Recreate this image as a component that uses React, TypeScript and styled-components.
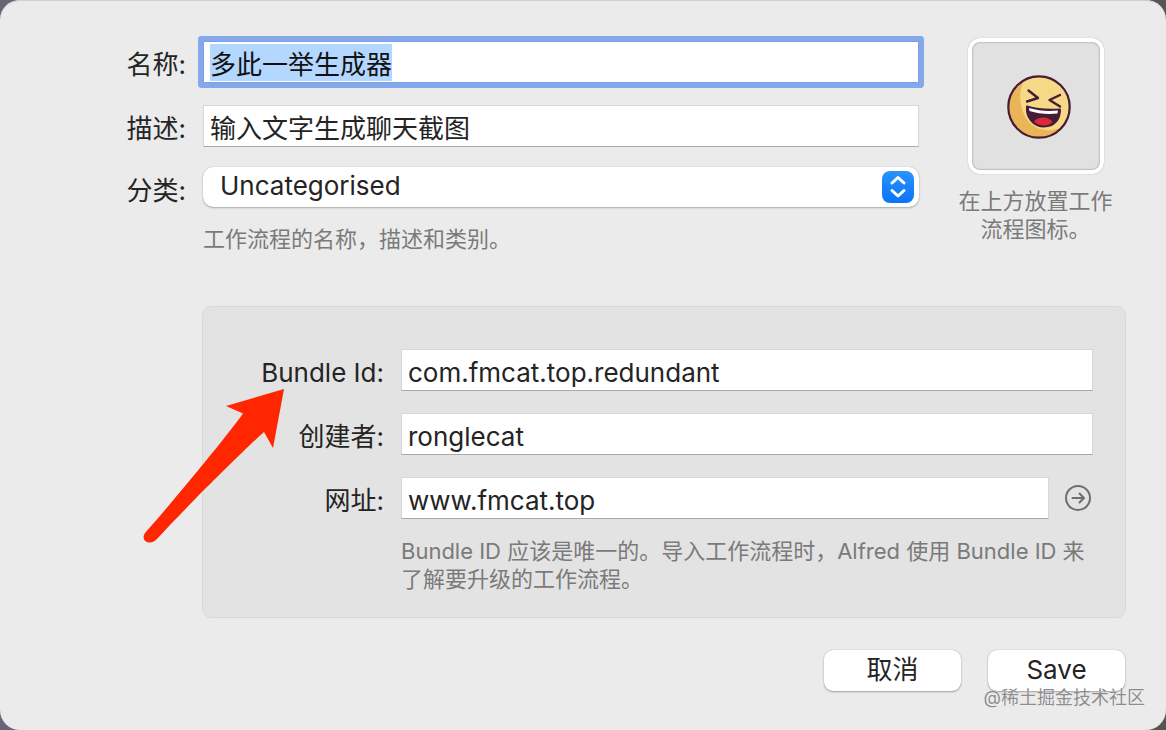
import React, { useEffect, useRef } from "react";
import styled, { createGlobalStyle } from "styled-components";

const GlobalStyle = createGlobalStyle`
  *, *::before, *::after { box-sizing: border-box; }
  body {
    margin: 0;
    background: linear-gradient(90deg, #6b6479 0%, #5c5a60 60%, #555 100%);
    font-family: Inter, "Noto Sans CJK SC", sans-serif;
    color: #242424;
  }
  button, input, select { font: inherit; color: inherit; }
`;

const Sheet = styled.form`
  position: relative;
  min-height: 100vh;
  padding: 41px 40px 39px;
  background: #ebebeb;
  border-radius: 20px;
  box-shadow: inset 0 1px 0 #cfcfcf;
  font-size: 26px;
  line-height: 34px;
`;

const Summary = styled.section`
  display: flex;
  gap: 38px;
  padding-right: 12px;
`;

const Fields = styled.div<{ $labelWidth: number }>`
  flex: 1;
  display: grid;
  grid-template-columns: ${(p) => p.$labelWidth}px minmax(0, 1fr);
  column-gap: 17px;
  row-gap: 22px;
  align-items: center;
  align-content: start;
`;

const Label = styled.label`
  text-align: right;
  white-space: nowrap;
  line-height: 28px;
  padding-top: 6px;
`;

const TextInput = styled.input<{ $cjk?: boolean }>`
  width: 100%;
  min-width: 0;
  height: 42px;
  padding: ${(p) => (p.$cjk ? "3px 6px" : "5px 6px 1px")};
  border: 1px solid #d6d6d6;
  border-bottom-color: #a9a9a9;
  border-radius: 0;
  background: #fff;
  line-height: 34px;
  outline: none;

  &:focus {
    border-color: #7f9fdc;
    box-shadow: 0 0 0 5px #84a8ec;
    border-radius: 1px;
  }
  &::selection {
    background: #b3d7ff;
    color: #111;
  }
`;

const SelectBox = styled.div`
  position: relative;
  height: 40px;
  margin-top: -2px;
`;

const Select = styled.select`
  display: block;
  appearance: none;
  width: 100%;
  height: 40px;
  padding: 0 48px 2px 17px;
  border: 0;
  border-radius: 10px;
  background: #fff;
  box-shadow: 0 0 1px rgba(0, 0, 0, 0.3), 0 1px 2px rgba(0, 0, 0, 0.25);
  outline: none;
`;

const Stepper = styled.svg`
  position: absolute;
  top: 4px;
  right: 5px;
  pointer-events: none;
`;

const Hint = styled.p`
  margin: 0;
  font-size: 22px;
  line-height: 28px;
  color: #7a7a7a;
`;

const FieldHint = styled(Hint)`
  grid-column: 2;
  margin-top: -4px;
`;

const IconColumn = styled.div`
  width: 157px;
  display: flex;
  flex-direction: column;
  align-items: center;
  gap: 13px;
  text-align: center;
`;

const IconWell = styled.button`
  display: grid;
  place-items: center;
  width: 136px;
  height: 136px;
  margin-top: -3px;
  padding: 0;
  border: 4px solid #fff;
  border-radius: 12px;
  background: #e1e1e1;
  box-shadow: 0 0 1px rgba(0, 0, 0, 0.4), inset 0 0 2px rgba(0, 0, 0, 0.5);
`;

const Panel = styled.section`
  display: flex;
  margin: 53px 0 32px 162px;
  padding: 42px 32px 24px;
  background: #e3e3e3;
  border: 1px solid #d9d9d9;
  border-radius: 9px;
`;

const UrlRow = styled.div`
  display: flex;
  align-items: center;
  gap: 15px;
`;

const OpenLink = styled.a`
  display: flex;
  flex: none;
  padding-right: 1px;
  color: #6e6e6e;
`;

const Actions = styled.footer`
  display: flex;
  justify-content: flex-end;
  gap: 27px;
  padding-right: 1px;
`;

const PushButton = styled.button`
  width: 137px;
  height: 41px;
  padding: 0 0 2px;
  border: 0;
  border-radius: 9px;
  background: #fff;
  box-shadow: 0 0 1px rgba(0, 0, 0, 0.3), 0 1px 2px rgba(0, 0, 0, 0.3);
`;

const Pointer = styled.svg`
  position: absolute;
  left: 140px;
  top: 386px;
  pointer-events: none;
`;

const Watermark = styled.span`
  position: absolute;
  right: 21px;
  bottom: 20px;
  font-size: 18px;
  line-height: 24px;
  color: #8c8c8c;
  text-shadow: 0 0 1px #fff;
  pointer-events: none;
`;

const LaughingFace = () => (
  <svg width="70" height="66" viewBox="-6 -2 70 66" aria-hidden="true">
    <circle cx="32" cy="32" r="30.5" fill="#f6d987" />
    <path
      d="M17 5.5A30.5 30.5 0 1 0 54 53C45 56 32 57 23 48C13 38 10 19 17 5.5Z"
      fill="#eab458"
    />
    <circle cx="32" cy="32" r="30.7" fill="none" stroke="#471b35" strokeWidth="2.2" />
    <g fill="none" stroke="#471b35" strokeWidth="2.4" strokeLinecap="round" strokeLinejoin="round">
      <path d="M21.5 15.5L31 23L20 26.5" />
      <path d="M53 20L42.5 25L53 31.5" />
    </g>
    <path
      d="M20 31.5C30 34.5 41 35.5 53 34.5C53 45 47 51.5 37 51.5C27 51.5 19 43 20 31.5Z"
      fill="#471b35"
      stroke="#471b35"
      strokeWidth="2"
      strokeLinejoin="round"
    />
    <path d="M22 33C32 36 41 36.5 51 35.5L50.5 38.5C40 39.5 31 38.5 22.5 36Z" fill="#fff" />
    <path d="M27 46.5C31 41 42 41 45.5 47C41 52 32 51.5 27 46.5Z" fill="#d92b36" />
  </svg>
);

export default function App() {
  const nameRef = useRef<HTMLInputElement>(null);

  useEffect(() => {
    nameRef.current?.focus();
    nameRef.current?.select();
  }, []);

  return (
    <>
      <GlobalStyle />
      <Sheet onSubmit={(e) => e.preventDefault()}>
        <Summary>
          <Fields $labelWidth={146}>
            <Label htmlFor="name">名称:</Label>
            <TextInput $cjk id="name" ref={nameRef} defaultValue="多此一举生成器" />
            <Label htmlFor="description">描述:</Label>
            <TextInput $cjk id="description" defaultValue="输入文字生成聊天截图" />
            <Label htmlFor="category">分类:</Label>
            <SelectBox>
              <Select id="category" defaultValue="Uncategorised">
                <option>Uncategorised</option>
              </Select>
              <Stepper width="32" height="32" viewBox="0 0 32 32" aria-hidden="true">
                <defs>
                  <linearGradient id="stepper" x1="0" y1="0" x2="0" y2="1">
                    <stop offset="0" stopColor="#2a93fb" />
                    <stop offset="1" stopColor="#0a74fb" />
                  </linearGradient>
                </defs>
                <rect width="32" height="32" rx="8" fill="url(#stepper)" />
                <path
                  d="M10 12L16 6.5L22 12M10 19.500L16 25L22 19.500"
                  fill="none"
                  stroke="#fff"
                  strokeWidth="3"
                  strokeLinecap="round"
                  strokeLinejoin="round"
                />
              </Stepper>
            </SelectBox>
            <FieldHint>工作流程的名称，描述和类别。</FieldHint>
          </Fields>
          <IconColumn>
            <IconWell type="button" aria-label="工作流程图标">
              <LaughingFace />
            </IconWell>
            <Hint>
              在上方放置工作
              <br />
              流程图标。
            </Hint>
          </IconColumn>
        </Summary>

        <Panel>
          <Fields $labelWidth={149}>
            <Label htmlFor="bundle">Bundle Id:</Label>
            <TextInput id="bundle" defaultValue="com.fmcat.top.redundant" />
            <Label htmlFor="creator">创建者:</Label>
            <TextInput id="creator" defaultValue="ronglecat" />
            <Label htmlFor="site">网址:</Label>
            <UrlRow>
              <TextInput id="site" defaultValue="www.fmcat.top" />
              <OpenLink href="#site" aria-label="www.fmcat.top">
                <svg width="28" height="28" viewBox="0 0 28 28" fill="none" stroke="currentColor" strokeWidth="2" strokeLinecap="round" strokeLinejoin="round">
                  <circle cx="14" cy="14" r="12" />
                  <path d="M8.5 14H19.5M15.5 9.5L20 14L15.5 18.5" />
                </svg>
              </OpenLink>
            </UrlRow>
            <FieldHint>
              Bundle ID 应该是唯一的。导入工作流程时，Alfred 使用 Bundle ID 来了解要升级的工作流程。
            </FieldHint>
          </Fields>
        </Panel>

        <Actions>
          <PushButton type="button">取消</PushButton>
          <PushButton type="submit">Save</PushButton>
        </Actions>

        <Pointer width="148" height="162" viewBox="0 0 148 162" aria-hidden="true">
          <path
            d="M144 3L86 20L103 27.5C88 49 24 126 5 147C2 151 4 156 9 156.5C12 157 15 155 17 153C50 117 106 62 124 46L133 62Z"
            fill="#ff2600"
          />
        </Pointer>
        <Watermark>@稀土掘金技术社区</Watermark>
      </Sheet>
    </>
  );
}
